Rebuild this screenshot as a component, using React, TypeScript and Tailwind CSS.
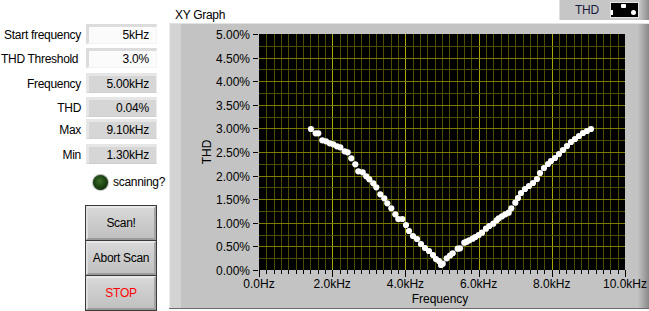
import React from "react";

const FONT = { fontFamily: '"Liberation Sans", Arial, sans-serif' };

const PX = 169; // panel origin x
const PY = 23; // panel origin y
const PLOT_X = 259 - PX;
const PLOT_Y = 33 - PY;
const PLOT_W = 366;
const PLOT_H = 236;

const dotsAbs: [number, number][] = [
  [311, 128], [315.7, 132.3], [318.3, 132.3], [322.3, 139.3], [326, 140.3], [329.7, 142.3],
  [333.3, 143.3], [337, 145.3], [340.3, 146.3], [344.7, 150.3], [347.7, 151.3], [351.3, 157.3],
  [355.3, 163.3], [358.3, 170.3], [362.7, 171.3], [366.3, 175.3], [369.3, 178.3], [373.3, 182.3],
  [376.3, 186.3], [380.3, 193.3], [384.3, 197.3], [387.3, 202.3], [391.3, 207.3], [395.3, 213.3],
  [398.3, 218], [402.3, 218], [406, 224], [409, 230], [413, 235], [417, 238], [421, 243],
  [425, 247], [429, 250], [433, 254], [436, 258], [439, 260], [441, 264],
  [442.7, 262.7], [446.7, 257.3], [450, 254.5], [452.7, 252.3], [457.7, 247.7], [460, 247.3],
  [464.3, 241.7], [466.7, 240.7], [469.3, 239.3], [472.7, 237.7], [475.3, 236], [478.7, 234],
  [482, 231.7], [486, 227.7], [489.3, 225], [493.3, 222.7], [496.7, 219.3], [498.7, 217.3],
  [502, 215.3], [505.3, 213.3], [508.7, 211.7], [511.3, 207.3], [515.3, 201.7],
  [518, 197], [521, 192], [525, 188], [529, 185], [533, 182], [537, 178], [540, 172],
  [544, 167], [548, 163], [551, 160], [555, 157], [559, 153], [563, 149], [567, 145],
  [571, 141], [575, 138], [579, 135], [583, 132], [587, 130], [591, 128],
];

function Chart() {
  const vLines = [];
  for (let i = 1; i < 50; i++) {
    const x = Math.round(PLOT_X + (i * PLOT_W) / 50) + 0.5;
    const major = i % 10 === 0;
    vLines.push(
      <line key={"v" + i} x1={x} x2={x} y1={PLOT_Y} y2={PLOT_Y + PLOT_H}
        stroke={major ? "#a8a800" : "#4e4e00"} strokeWidth={1} />
    );
  }
  const hLines = [];
  for (let i = 1; i < 20; i++) {
    const y = Math.round(PLOT_Y + (i * PLOT_H) / 20) + 0.5;
    const major = i % 2 === 0;
    hLines.push(
      <line key={"h" + i} x1={PLOT_X} x2={PLOT_X + PLOT_W} y1={y} y2={y}
        stroke={major ? "#7c7c00" : "#4e4e00"} strokeWidth={1} />
    );
  }
  const yLabels = [];
  for (let i = 0; i <= 10; i++) {
    const y = Math.round(PLOT_Y + PLOT_H - (i * PLOT_H) / 10) + 0.5;
    yLabels.push(
      <g key={"yl" + i}>
        <line x1={PLOT_X - 6} x2={PLOT_X - 1} y1={y} y2={y} stroke="#000" />
        <text x={PLOT_X - 9} y={y + 4.5} textAnchor="end" fontSize={12} fill="#000" style={FONT}>
          {(i * 0.5).toFixed(2)}%
        </text>
      </g>
    );
  }
  const xTicks = [];
  for (let i = 0; i <= 50; i++) {
    const x = Math.round(PLOT_X + (i * PLOT_W) / 50) + 0.5;
    const major = i % 10 === 0;
    xTicks.push(
      <line key={"xt" + i} x1={x} x2={x} y1={PLOT_Y + PLOT_H} y2={PLOT_Y + PLOT_H + (major ? 7 : 4)}
        stroke="#000" />
    );
  }
  const xLabels = ["0.0Hz", "2.0kHz", "4.0kHz", "6.0kHz", "8.0kHz", "10.0kHz"];
  return (
    <svg width={480} height={284} className="block">
      <defs>
        <linearGradient id="rg" x1="0" x2="1" y1="0" y2="0">
          <stop offset="0" stopColor="#c6c6c6" />
          <stop offset="1" stopColor="#8a8a8a" />
        </linearGradient>
      </defs>
      <rect x={0} y={0} width={12} height={284} fill="#d3d3d3" />
      <rect x={0} y={0} width={1} height={284} fill="#ececec" />
      <rect x={12} y={0} width={456} height={284} fill="#c3c3c3" />
      <rect x={468} y={0} width={12} height={284} fill="url(#rg)" />
      <rect x={PLOT_X} y={PLOT_Y} width={PLOT_W} height={PLOT_H} fill="#000" />
      {vLines}
      {hLines}
      {yLabels}
      {xTicks}
      {xLabels.map((l, i) => (
        <text key={l} x={PLOT_X + (i * PLOT_W) / 5} y={PLOT_Y + PLOT_H + 18} textAnchor="middle"
          fontSize={12} fill="#000" style={FONT}>
          {l}
        </text>
      ))}
      <text x={271} y={279} textAnchor="middle" fontSize={12} fill="#000" style={FONT}>Frequency</text>
      <text x={0} y={0} textAnchor="middle" fontSize={12} fill="#000" style={FONT}
        transform={`translate(42 128) rotate(-90)`}>THD</text>
      {dotsAbs.map(([x, y], i) => (
        <circle key={"d" + i} cx={x - PX} cy={y - PY} r={3.1} fill="#fff" />
      ))}
    </svg>
  );
}

function Field({ label, value, control, top, leftLabel }: { label: string; value: string; control?: boolean; top: number; leftLabel?: boolean }) {
  return (
    <div className="flex items-center h-[20px]" style={{ marginTop: top }}>
      <div className={"w-[86px] shrink-0 " + (leftLabel ? "pl-[1px] text-left" : "pr-[5px] text-right")}>
        <span className="text-[12px] tracking-[-0.3px] text-black whitespace-nowrap">{label}</span>
      </div>
      <div
        className={
          "w-[71px] h-[20px] flex items-center justify-end pr-[7px] border-t-[3px] border-l-[3px] border-b border-r " +
          (control
            ? "bg-[#fbfbfb] border-t-[#dcdcdc] border-l-[#dcdcdc] border-b-[#f4f4f4] border-r-[#f4f4f4]"
            : "bg-[#d6d6d6] border-t-[#e6e6e6] border-l-[#e6e6e6] border-b-[#cfcfcf] border-r-[#ececec]")
        }
      >
        <span className="text-[12px] tracking-[-0.2px] text-black">{value}</span>
      </div>
    </div>
  );
}

function Btn({ children, red }: { children: React.ReactNode; red?: boolean }) {
  return (
    <div className="w-[72px] h-[36px] -mt-px border border-[#3a3a3a] bg-[#c8c8c8]">
      <div className="w-full h-full border-t-2 border-l-2 border-b-2 border-r-2 border-t-[#e8e8e8] border-l-[#dedede] border-b-[#9a9a9a] border-r-[#a4a4a4] bg-gradient-to-b from-[#d8d8d8] to-[#c0c0c0] flex items-center justify-center">
        <span className={"text-[12px] tracking-[-0.3px] " + (red ? "text-[#ff0000]" : "text-black")}>{children}</span>
      </div>
    </div>
  );
}

export default function App() {
  return (
    <div className="w-[649px] h-[311px] bg-white flex overflow-hidden" style={FONT}>
      {/* left controls */}
      <div className="w-[169px] shrink-0 flex flex-col">
        <Field label="Start frequency" value="5kHz" control top={24} />
        <Field label="THD Threshold" value="3.0%" control top={4} leftLabel />
        <Field label="Frequency" value="5.00kHz" top={5} />
        <Field label="THD" value="0.04%" top={4} />
        <Field label="Max" value="9.10kHz" top={2} />
        <Field label="Min" value="1.30kHz" top={5} />
        <div className="flex items-center mt-[9px] ml-[92px] h-[18px]">
          <div className="w-[17px] h-[17px] rounded-full bg-[#b8b8b8] p-[1px]">
            <div className="w-full h-full rounded-full bg-[radial-gradient(circle_at_45%_40%,#3f6e2c_0%,#1d4512_45%,#0c2006_100%)]" />
          </div>
          <span className="ml-[4px] text-[12px] tracking-[-0.3px] text-black">scanning?</span>
        </div>
        <div className="flex flex-col ml-[85px] mt-[15px]">
          <Btn>Scan!</Btn>
          <Btn>Abort Scan</Btn>
          <Btn red>STOP</Btn>
        </div>
      </div>

      {/* graph */}
      <div className="w-[480px] shrink-0 flex flex-col">
        <div className="h-[23px] flex items-start justify-between">
          <span className="ml-[6px] mt-[7px] text-[12px] tracking-[-0.3px] text-black leading-[16px]">XY Graph</span>
          <div className="w-[90px] h-[20px] flex bg-[#c6c6c6] border-l border-[#e0e0e0]">
            <div className="flex-1 flex items-center">
              <span className="ml-[15px] text-[12px] tracking-[-0.3px] text-[#1a1a3a]">THD</span>
              <div className="ml-[11px] w-[29px] h-[16px] bg-black border border-[#e4e4e4] relative">
                <div className="absolute w-[5px] h-[4px] bg-white rounded-[1px] left-[10px] top-[1px]" />
                <div className="absolute w-[2px] h-[5px] bg-white left-[0px] top-[7px]" />
                <div className="absolute w-[5px] h-[5px] bg-white rounded-full left-[20px] top-[7px]" />
              </div>
            </div>
            <div className="w-[12px] h-full bg-gradient-to-r from-[#c8c8c8] to-[#8c8c8c]" />
          </div>
        </div>
        <div className="h-[286px] flex bg-[#c3c3c3] border-t border-[#e2e2e2] border-b-2 border-b-[#6a6a6a]">
          <Chart />
        </div>
      </div>
    </div>
  );
}
